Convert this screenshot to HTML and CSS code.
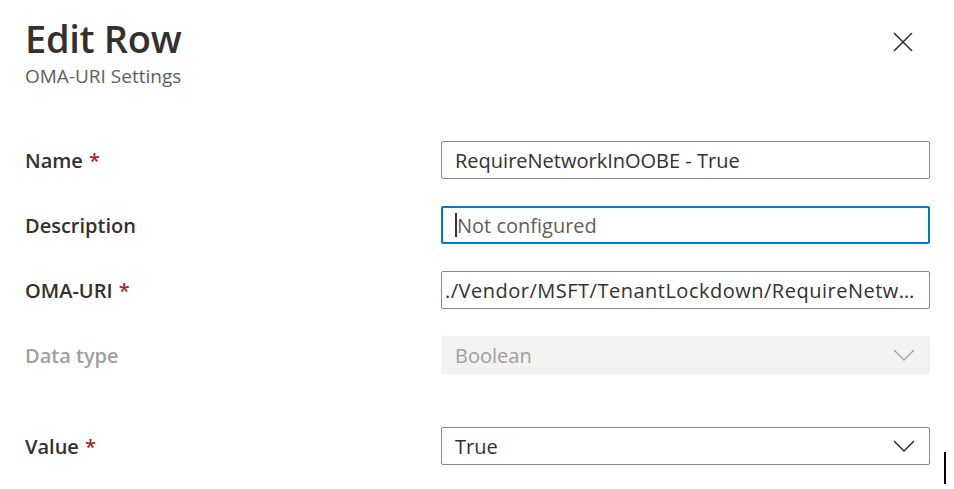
FILE: index.html
```html
<!DOCTYPE html>
<html>
<head>
<meta charset="utf-8">
<link rel="stylesheet" href="styles.css">
</head>
<body>
<div class="panel">
  <header class="head">
    <div class="titles">
      <h1 class="title">Edit Row</h1>
      <div class="subtitle">OMA-URI Settings</div>
    </div>
    <button class="close" aria-label="Close">
      <svg width="20" height="20" viewBox="0 0 20 20"><path d="M1 1 L19 19 M19 1 L1 19" stroke="#323130" stroke-width="1.6" fill="none"/></svg>
    </button>
  </header>
  <div class="form">
    <div class="row">
      <div class="label">Name <span class="req">*</span></div>
      <div class="field"><span class="val">RequireNetworkInOOBE - True</span></div>
    </div>
    <div class="row">
      <div class="label">Description</div>
      <div class="field focus"><span class="caret"></span><span class="ph">Not configured</span></div>
    </div>
    <div class="row">
      <div class="label">OMA-URI <span class="req">*</span></div>
      <div class="field scrolled"><span class="val wide">./Vendor/MSFT/TenantLockdown/RequireNetw…</span></div>
    </div>
    <div class="row">
      <div class="label disabled">Data type</div>
      <div class="field dis"><span class="val">Boolean</span>
        <svg class="chev" width="22" height="12" viewBox="0 0 22 12"><path d="M1 1 L11 11 L21 1" stroke="#a19f9d" stroke-width="1.3" fill="none"/></svg>
      </div>
    </div>
    <div class="row gap">
      <div class="label">Value <span class="req">*</span></div>
      <div class="field"><span class="val">True</span>
        <svg class="chev" width="22" height="12" viewBox="0 0 22 12"><path d="M1 1 L11 11 L21 1" stroke="#323130" stroke-width="1.5" fill="none"/></svg>
      </div>
    </div>
  </div>
  <span class="cursor"></span>
</div>
</body>
</html>
```
FILE: styles.css
```css
* { box-sizing: border-box; }
html, body { margin: 0; padding: 0; background: #fff; }
body { font-family: "Open Sans", "Noto Sans", sans-serif; color: #323130; width: 954px; height: 489px; overflow: hidden; }
.panel { position: relative; padding: 0 24px 0 25px; }
.head { display: flex; justify-content: space-between; align-items: flex-start; padding-top: 13px; }
.title { margin: 0; font-size: 38px; font-weight: 600; line-height: 50px; letter-spacing: -0.3px; color: #323130; }
.subtitle { font-size: 19px; color: #605e5c; line-height: 26px; margin-top: 0; }
.close { background: none; border: 0; padding: 0; margin: 19px 17px 0 0; width: 20px; height: 20px; display: flex; }
.form { display: flex; flex-direction: column; gap: 27px; margin-top: 52px; }
.row { display: flex; align-items: center; height: 38px; }
.row.gap { margin-top: 26px; }
.label { width: 416px; flex: none; font-size: 20px; font-weight: 600; color: #323130; }
.label.disabled { color: #a19f9d; }
.req { color: #a4262c; margin-left: 1px; }
.field { flex: 1; min-width: 0; height: 38px; border: 1px solid #8a8886; border-radius: 2px; display: flex; align-items: center; padding: 0 10px 0 13px; font-size: 20px; color: #323130; }
.field.scrolled { padding-left: 3px; padding-right: 3px; }
.field.focus { border: 2px solid #0078d4; padding-left: 12px; }
.field.dis { border-color: #f3f2f1; background: #f3f2f1; color: #a19f9d; }
.val { flex: 1; min-width: 0; white-space: nowrap; }
.val.wide { letter-spacing: 0.5px; }
.ph { color: #605e5c; }
.caret { width: 2px; height: 24px; background: #323130; }
.chev { flex: none; margin-right: 4px; }
.cursor { position: absolute; left: 944px; top: 452px; width: 2px; height: 32px; background: #000; }
```
